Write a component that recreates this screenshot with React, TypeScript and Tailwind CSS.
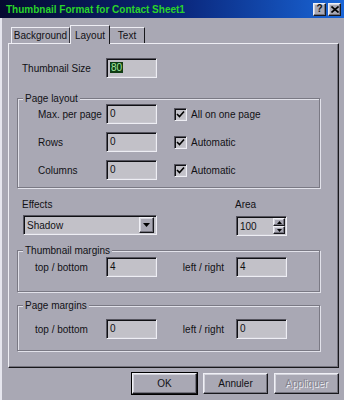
import type { ReactNode } from "react";

const BG = "bg-[#a9a8b4]";
const SUNKEN =
  "border border-t-[#55545e] border-l-[#55545e] border-b-[#eeeef4] border-r-[#eeeef4] shadow-[inset_1px_1px_0_#101014,inset_-1px_-1px_0_#c9c8d0]";
const RAISED =
  "border border-t-[#f0f0f6] border-l-[#f0f0f6] border-b-[#18181c] border-r-[#18181c] shadow-[inset_-1px_-1px_0_#74737e,inset_1px_1px_0_#d4d4dc]";

function Field({ value, className = "" }: { value: ReactNode; className?: string }) {
  return (
    <div className={`h-[20px] w-[51px] shrink-0 bg-[#c2c1c8] pl-[3px] leading-[18px] ${SUNKEN} ${className}`}>
      {value}
    </div>
  );
}

function Check({ label }: { label: string }) {
  return (
    <div className="flex items-center gap-[4px]">
      <div className={`h-[13px] w-[13px] bg-[#c2c1c8] ${SUNKEN} flex items-center justify-center`}>
        <svg width="9" height="9" viewBox="0 0 9 9">
          <path d="M1 4 L3.5 6.5 L8 1.5" fill="none" stroke="#000" strokeWidth="1.6" />
        </svg>
      </div>
      <span>{label}</span>
    </div>
  );
}

function Group({ label, className = "", children }: { label: string; className?: string; children: ReactNode }) {
  return (
    <div
      className={`ml-[8px] w-[303px] border border-[#7a7984] shadow-[inset_1px_1px_0_#e2e2ea,1px_1px_0_#e2e2ea] ${className}`}
    >
      <div className={`-mt-[7px] -mb-[6px] ml-[5px] h-[13px] w-fit px-[2px] leading-[13px] ${BG}`}>{label}</div>
      {children}
    </div>
  );
}

function Btn({ children, primary, disabled }: { children: ReactNode; primary?: boolean; disabled?: boolean }) {
  return (
    <div
      className={`flex h-[21px] w-[65px] items-center justify-center ${RAISED} ${
        primary ? "outline outline-1 outline-black" : ""
      } ${disabled ? "text-[#85848e] [text-shadow:1px_1px_0_#eeeef4]" : ""}`}
    >
      {children}
    </div>
  );
}

function MarginRow({ a, b }: { a: string; b: string }) {
  return (
    <div className="flex items-center">
      <span className="w-[88px] pl-[17px]">top / bottom</span>
      <Field value={a} />
      <span className="w-[79px] pr-[12px] text-right">left / right</span>
      <Field value={b} />
    </div>
  );
}

export default function App() {
  return (
    <div
      className={`flex h-[400px] w-[344px] flex-col whitespace-nowrap ${BG} font-['Liberation_Sans',Arial,sans-serif] text-[10px] text-[#111114]`}
    >
      {/* title bar */}
      <div className="flex h-[18px] shrink-0 items-center bg-gradient-to-r from-[#050a30] via-[#0a2478] to-[#1a66d8] pl-[6px] pr-[3px]">
        <span className="text-[10px] font-bold text-[#2ad42a]">Thumbnail Format for Contact Sheet1</span>
        <div className="ml-auto flex gap-[2px]">
          <div className={`flex h-[13px] w-[13px] items-center justify-center text-[10px] font-bold leading-none ${BG} ${RAISED}`}>
            ?
          </div>
          <div className={`flex h-[13px] w-[13px] items-center justify-center ${BG} ${RAISED}`}>
            <svg width="8" height="7" viewBox="0 0 8 7">
              <path d="M0.5 0.5 L7.5 6.5 M7.5 0.5 L0.5 6.5" stroke="#000" strokeWidth="1.6" />
            </svg>
          </div>
        </div>
      </div>

      <div className="flex flex-1 flex-col border-l-2 border-l-[#e6e6ee] pl-[6px] pr-[5px]">
        {/* tabs */}
        <div className="relative z-10 mt-[8px] flex h-[17px] items-end pl-[3px]">
          <div className="flex h-[16px] w-[59px] items-center justify-center border-l border-t border-r border-l-[#eeeef4] border-t-[#eeeef4] border-r-[#33323a]">
            Background
          </div>
          <div className={`-mb-px flex h-[19px] w-[40px] items-center justify-center border-l border-t border-r border-l-[#eeeef4] border-t-[#eeeef4] border-r-[#18181c] ${BG}`}>
            Layout
          </div>
          <div className="flex h-[16px] w-[35px] items-center justify-center border-t border-r border-t-[#eeeef4] border-r-[#18181c]">
            Text
          </div>
        </div>

        {/* panel */}
        <div className="h-[325px] w-[331px] border border-t-[#eeeef4] border-l-[#eeeef4] border-b-[#18181c] border-r-[#18181c] shadow-[inset_-1px_-1px_0_#74737e]">
          <div className="mt-[14px] flex items-center pl-[13px]">
            <span className="w-[84px]">Thumbnail Size</span>
            <Field
              value={<span className="bg-[#0f3c14] px-[1px] text-[#a4e6a0]">80</span>}
            />
          </div>

          <Group label="Page layout" className="mt-[20px]">
            <div className="flex flex-col gap-[8px] pb-[7px] pt-[5px]">
              {[
                ["Max. per page", "All on one page"],
                ["Rows", "Automatic"],
                ["Columns", "Automatic"],
              ].map(([l, c]) => (
                <div key={l} className="flex items-center">
                  <span className="w-[88px] pl-[20px]">{l}</span>
                  <Field value="0" />
                  <div className="ml-[17px]">
                    <Check label={c} />
                  </div>
                </div>
              ))}
            </div>
          </Group>

          {/* effects / area */}
          <div className="mt-[10px] flex pl-[13px]">
            <div className="flex flex-col">
              <span className="leading-[13px]">Effects</span>
              <div className={`mt-[4px] ml-[1px] flex h-[20px] w-[134px] items-center bg-[#c2c1c8] pl-[3px] pr-[2px] ${SUNKEN}`}>
                <span>Shadow</span>
                <div className={`ml-auto flex h-[16px] w-[15px] items-center justify-center ${BG} ${RAISED}`}>
                  <svg width="7" height="4" viewBox="0 0 7 4">
                    <path d="M0 0 H7 L3.5 4 Z" fill="#000" />
                  </svg>
                </div>
              </div>
            </div>
            <div className="ml-[78px] flex flex-col">
              <span className="leading-[13px]">Area</span>
              <div className={`mt-[5px] ml-[1px] flex h-[20px] w-[51px] items-center bg-[#c2c1c8] pl-[3px] pr-[1px] ${SUNKEN}`}>
                <span>100</span>
                <div className="ml-auto flex flex-col">
                  <div className={`flex h-[8px] w-[12px] items-center justify-center ${BG} ${RAISED}`}>
                    <svg width="5" height="3" viewBox="0 0 5 3">
                      <path d="M0 3 H5 L2.5 0 Z" fill="#000" />
                    </svg>
                  </div>
                  <div className={`flex h-[8px] w-[12px] items-center justify-center ${BG} ${RAISED}`}>
                    <svg width="5" height="3" viewBox="0 0 5 3">
                      <path d="M0 0 H5 L2.5 3 Z" fill="#000" />
                    </svg>
                  </div>
                </div>
              </div>
            </div>
          </div>

          <Group label="Thumbnail margins" className="mt-[14px]">
            <div className="pb-[14px] pt-[6px]">
              <MarginRow a="4" b="4" />
            </div>
          </Group>

          <Group label="Page margins" className="mt-[13px]">
            <div className="pb-[11px] pt-[13px]">
              <MarginRow a="0" b="0" />
            </div>
          </Group>
        </div>

        {/* buttons */}
        <div className="mt-[5px] flex w-[331px] justify-end gap-[6px]">
          <Btn primary>OK</Btn>
          <Btn>Annuler</Btn>
          <Btn disabled>Appliquer</Btn>
        </div>
      </div>
    </div>
  );
}
